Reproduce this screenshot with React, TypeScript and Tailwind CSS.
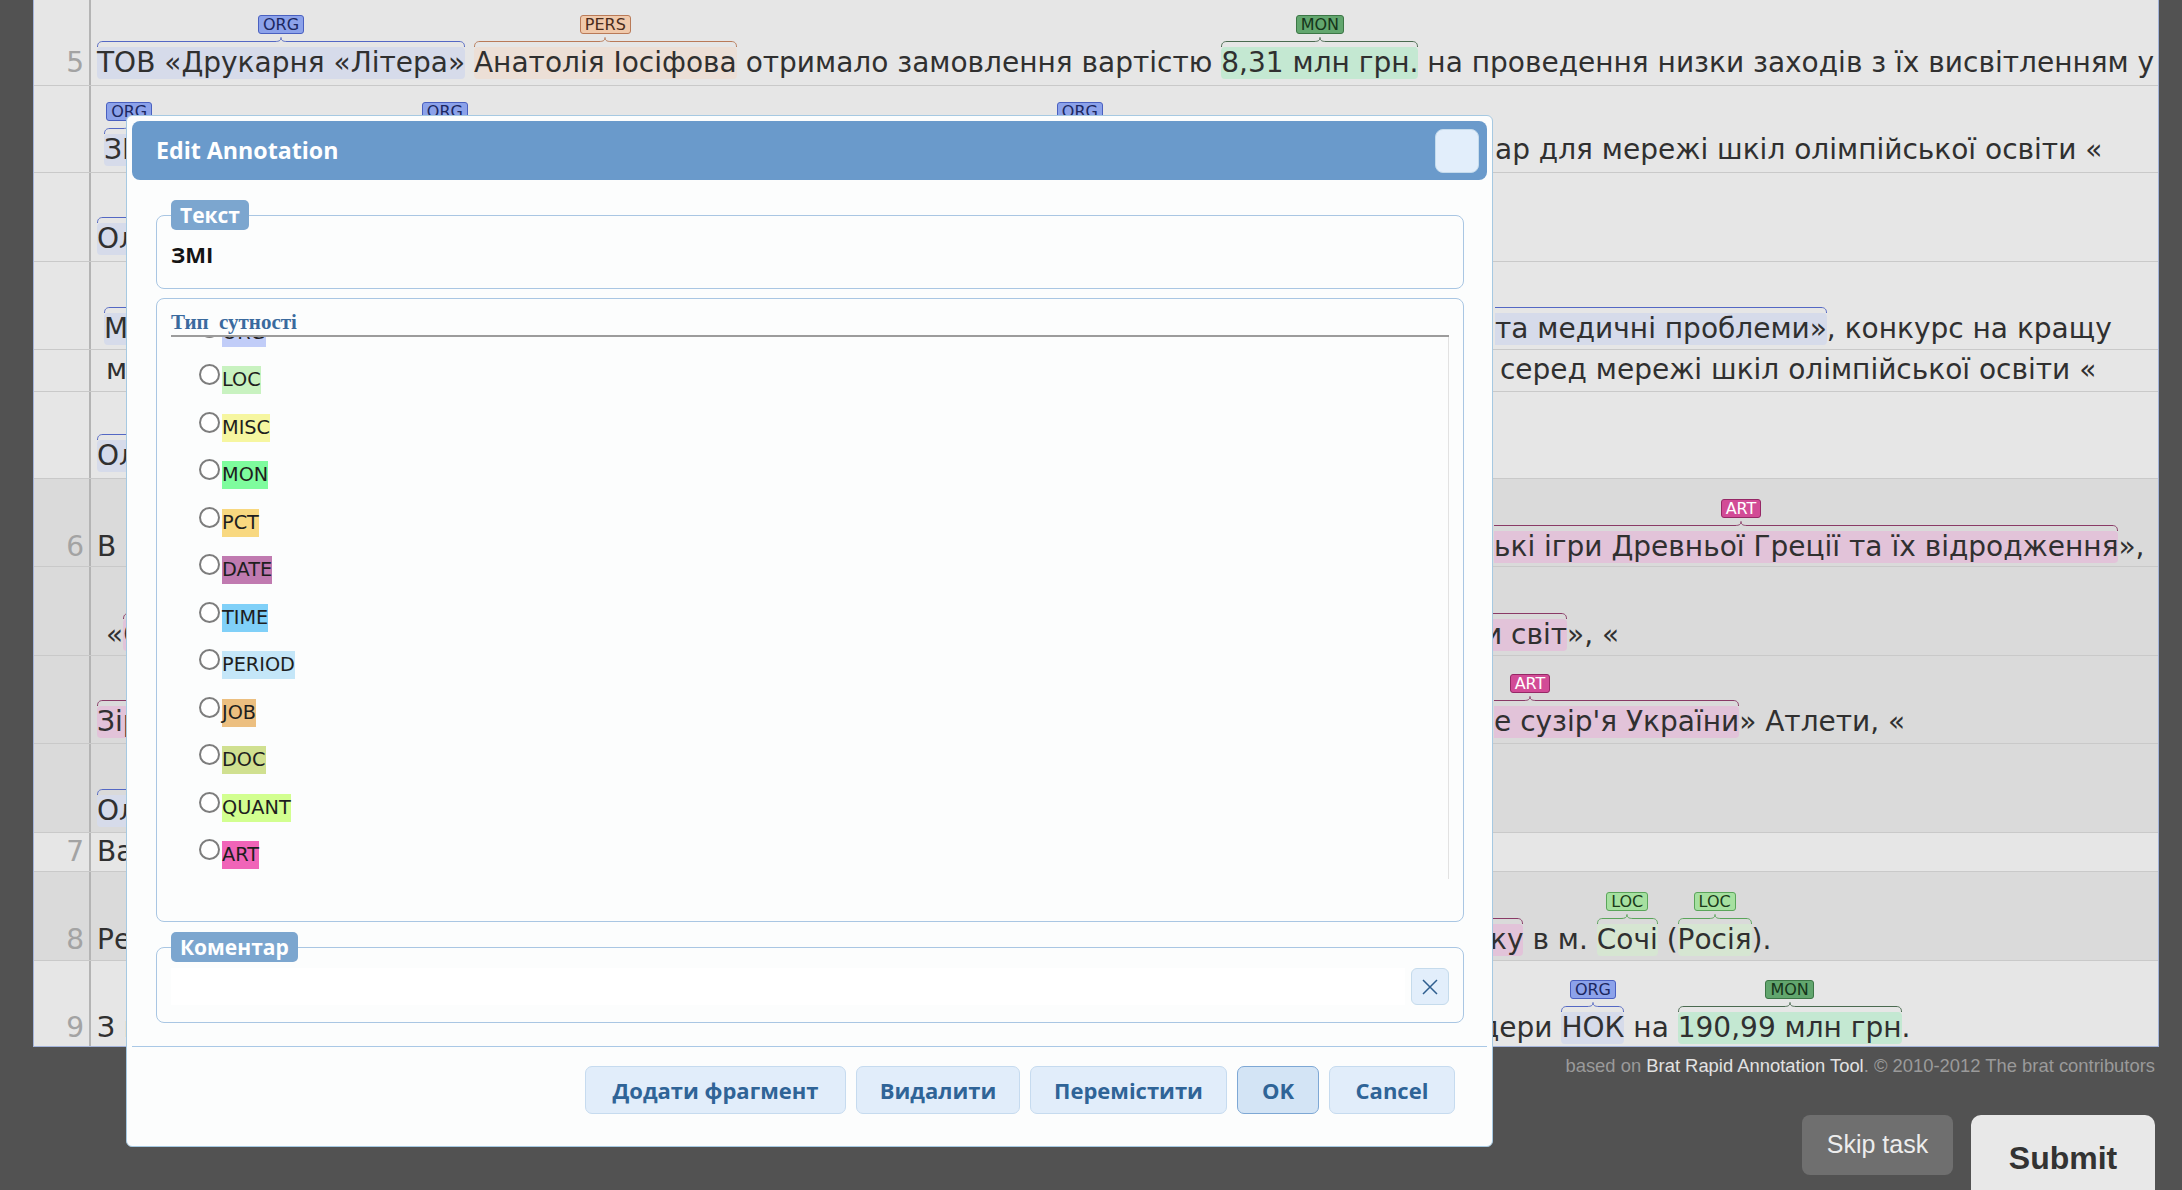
import type { ReactNode } from 'react'

const TYPES = {
  ORG: { hl: 'bg-[#d6dbea]', lab: 'bg-[#8ca2ea] border-[#4a60c0] text-[#1b2760]', br: 'text-[#5468c4]' },
  PERS: { hl: 'bg-[#ecdfd6]', lab: 'bg-[#f0c9ab] border-[#b97a58] text-[#4a2c1c]', br: 'text-[#b97a58]' },
  MON: { hl: 'bg-[#c4e8d2]', lab: 'bg-[#62a66e] border-[#3c7646] text-[#15351a]', br: 'text-[#4a6a50]' },
  ART: { hl: 'bg-[#e2c3d9]', lab: 'bg-[#d24b96] border-[#962866] text-white', br: 'text-[#8a3a66]' },
  LOC: { hl: 'bg-[#d6e6d2]', lab: 'bg-[#a6e0a0] border-[#5aa55a] text-[#1a3a1a]', br: 'text-[#5aa55a]' },
}
type K = keyof typeof TYPES

const ENTITY = [
  { k: 'ORG', bg: 'bg-[#c1cdf8]' },
  { k: 'LOC', bg: 'bg-[#c8f2c0]' },
  { k: 'MISC', bg: 'bg-[#f6f6a0]' },
  { k: 'MON', bg: 'bg-[#7efc9d]' },
  { k: 'PCT', bg: 'bg-[#f8d880]' },
  { k: 'DATE', bg: 'bg-[#c07ab0]' },
  { k: 'TIME', bg: 'bg-[#80d0f8]' },
  { k: 'PERIOD', bg: 'bg-[#c4e6f8]' },
  { k: 'JOB', bg: 'bg-[#ecbf80]' },
  { k: 'DOC', bg: 'bg-[#d0e090]' },
  { k: 'QUANT', bg: 'bg-[#d2ff90]' },
  { k: 'ART', bg: 'bg-[#f064b8]' },
]

function Label({ k }: { k: K }) {
  return (
    <span className={`h-[19px] shrink-0 rounded-[3px] border px-[4px] text-[16px] leading-[17px] ${TYPES[k].lab}`}>{k}</span>
  )
}

// фігурна дужка над фрагментом
function Brace({ tone, left = true, pre }: { tone: string; left?: boolean; pre?: string }) {
  const peak = left || !!pre
  return (
    <div className={`flex h-[10px] ${tone}`}>
      {left && (
        <svg width="6" height="10" className="shrink-0">
          <path d="M0.5 10C0.5 6.5 2 4.5 6 4.5" fill="none" stroke="currentColor" />
        </svg>
      )}
      {peak && <div className={`${pre ?? 'flex-1'} mt-[4px] h-0 shrink-0 border-t border-current`} />}
      {peak && (
        <svg width="12" height="10" className="shrink-0">
          <path d="M0 4.5C4 4.5 6 3.5 6 0.5C6 3.5 8 4.5 12 4.5" fill="none" stroke="currentColor" />
        </svg>
      )}
      <div className="mt-[4px] h-0 flex-1 border-t border-current" />
      <svg width="6" height="10" className="shrink-0">
        <path d="M0 4.5C4 4.5 5.5 6.5 5.5 10" fill="none" stroke="currentColor" />
      </svg>
    </div>
  )
}

function Txt({ t }: { t: string }) {
  return <span className="h-[32px] shrink-0 whitespace-pre leading-[32px]">{t}</span>
}

function Ann({ k, text }: { k: K; text: string }) {
  const s = TYPES[k]
  return (
    <div className="flex shrink-0 flex-col">
      <div className="flex h-[19px] justify-center">
        <Label k={k} />
      </div>
      <div className="mt-[3px]">
        <Brace tone={s.br} />
      </div>
      <span className={`h-[32px] whitespace-pre rounded-[4px] leading-[32px] ${s.hl}`}>{text}</span>
    </div>
  )
}

// фрагмент, початок якого сховано під діалогом
function Cut({ k, text, lw, pre }: { k: K; text: string; lw?: string; pre?: string }) {
  const s = TYPES[k]
  return (
    <div className="flex shrink-0 flex-col">
      <div className={`flex h-[19px] justify-center ${lw ?? ''}`}>{lw && <Label k={k} />}</div>
      <div className="mt-[3px]">
        <Brace tone={s.br} left={false} pre={pre} />
      </div>
      <span className={`h-[32px] whitespace-pre rounded-r-[4px] leading-[32px] ${s.hl}`}>{text}</span>
    </div>
  )
}

interface RowProps {
  num?: string
  h: string
  bg: string
  pb: string
  lp?: string
  ro?: string
  left?: ReactNode
  right?: ReactNode
  full?: ReactNode
  last?: boolean
}

function Row({ num, h, bg, pb, lp = 'pl-[6px]', ro = '', left, right, full, last }: RowProps) {
  return (
    <div className={`flex ${last ? '' : 'border-b border-[#c9c9c9]'} ${h} ${bg}`}>
      <div className={`flex w-[57px] shrink-0 items-end justify-end border-r-2 border-[#b4b4b4] pr-[5px] text-[#a3a3a3] ${pb}`}>
        {num && <span className="h-[32px] leading-[32px]">{num}</span>}
      </div>
      <div className={`flex min-w-0 flex-1 items-end overflow-hidden ${pb}`}>
        {full ? (
          <div className={`flex items-end ${lp}`}>{full}</div>
        ) : (
          <>
            <div className={`flex w-[1402px] shrink-0 items-end overflow-hidden ${lp}`}>{left}</div>
            <div className={`flex shrink-0 items-end ${ro}`}>{right}</div>
          </>
        )}
      </div>
    </div>
  )
}

function Fieldset({ legend, children, className = '' }: { legend: string; children: ReactNode; className?: string }) {
  return (
    <fieldset className={`rounded-[8px] border border-[#a9c6e3] px-[14px] ${className}`}>
      <legend className="h-[30px] rounded-[5px] bg-[#7ca6cf] px-[9px] text-[21px] font-bold leading-[30px] text-white">
        {legend}
      </legend>
      {children}
    </fieldset>
  )
}

const BUTTONS = [
  { t: 'Додати фрагмент', w: 'w-[261px]', c: 'bg-[#e1edfa] border-[#c6dbef]' },
  { t: 'Видалити', w: 'w-[164px]', c: 'bg-[#e1edfa] border-[#c6dbef]' },
  { t: 'Перемістити', w: 'w-[197px]', c: 'bg-[#e1edfa] border-[#c6dbef]' },
  { t: 'OK', w: 'w-[82px]', c: 'bg-[#d3e4f5] border-[#7ea8d5]' },
  { t: 'Cancel', w: 'w-[126px]', c: 'bg-[#e1edfa] border-[#c6dbef]' },
]

function Dialog() {
  return (
    <div className="absolute left-[126px] top-[115px] h-[1032px] w-[1367px] rounded-[6px] border border-[#a6c9e2] bg-[#fcfdfd] p-[5px] font-['Open_Sans',sans-serif]">
      {/* заголовок */}
      <div className="flex h-[59px] items-center justify-between rounded-[8px] bg-[#6a9acb] pl-[24px] pr-[8px]">
        <span className="text-[23.2px] font-bold text-white">Edit Annotation</span>
        <div className="h-[44px] w-[44px] rounded-[8px] border border-[#c5dbec] bg-[#e2eefb]" />
      </div>

      <div className="pl-[24px] pr-[23px] pt-[20px]">
        <Fieldset legend="Текст" className="pb-[18px]">
          <div className="mt-[8px] h-[32px] text-[22px] font-bold leading-[32px] text-[#141414]">ЗМІ</div>
        </Fieldset>

        {/* типи сутностей */}
        <div className="mt-[9px] rounded-[8px] border border-[#a9c6e3] px-[14px] pb-[42px] pt-[10px]">
          <div className="h-[28px] border-b-2 border-[#9c9c9c] font-['Liberation_Serif',serif] text-[21px] font-bold leading-[26px] text-[#3a6a9e] [word-spacing:5px]">
            Тип сутності
          </div>
          <div className="h-[542px] overflow-hidden border-r border-[#e2e2e2]">
            <div className="-mt-[28px]">
              {ENTITY.map(e => (
                <div key={e.k} className="flex h-[47.5px] items-center pl-[28px]">
                  <div className="-mt-[11px] h-[21px] w-[21px] shrink-0 rounded-full border-2 border-[#7d7d7d] bg-white" />
                  <span className={`ml-[2px] h-[28px] font-['DejaVu_Sans',sans-serif] text-[19.3px] leading-[28px] text-[#1e1e1e] ${e.bg}`}>
                    {e.k}
                  </span>
                </div>
              ))}
            </div>
          </div>
        </div>

        <Fieldset legend="Коментар" className="mt-[10px] pb-[17px]">
          <div className="mt-[6px] flex items-center">
            <div className="h-[37px] flex-1 bg-white" />
            <div className="ml-[6px] flex h-[37px] w-[38px] items-center justify-center rounded-[6px] border border-[#c5dbec] bg-[#e2eefb]">
              <svg width="20" height="20" viewBox="0 0 20 20">
                <path d="M3 3L17 17M17 3L3 17" stroke="#2f5f8f" strokeWidth="1.5" />
              </svg>
            </div>
          </div>
        </Fieldset>
      </div>

      <div className="mt-[23px] border-t border-[#a9c8e6]" />
      <div className="mt-[19px] flex justify-end gap-[10px] pr-[32px]">
        {BUTTONS.map(b => (
          <div
            key={b.t}
            className={`flex h-[48px] items-center justify-center rounded-[7px] border text-[22px] font-bold text-[#2f6497] ${b.w} ${b.c}`}
          >
            {b.t}
          </div>
        ))}
      </div>
    </div>
  )
}

export default function App() {
  const light = 'bg-[#e6e6e6]'
  const dark = 'bg-[#dadada]'
  return (
    <div className="relative h-[1190px] w-[2182px] overflow-hidden bg-[#525252] font-['DejaVu_Sans',sans-serif] text-[28px] text-[#303030]">
      <div className="ml-[33px] w-[2126px] border-x border-b border-[#a4b4da]">
        <Row
          num="5"
          h="h-[86px]"
          bg={light}
          pb="pb-[6px]"
          full={
            <>
              <Ann k="ORG" text="ТОВ «Друкарня «Літера»" />
              <Txt t=" " />
              <Ann k="PERS" text="Анатолія Іосіфова" />
              <Txt t=" отримало замовлення вартістю " />
              <Ann k="MON" text="8,31 млн грн." />
              <Txt t=" на проведення низки заходів з їх висвітленням у" />
            </>
          }
        />
        <Row
          h="h-[87px]"
          bg={light}
          pb="pb-[6px]"
          lp="pl-[13px]"
          ro="ml-[2px]"
          left={
            <>
              <Ann k="ORG" text="ЗМІ" />
              <div className="w-[259px] shrink-0" />
              <Ann k="ORG" text="НОК" />
              <div className="w-[572px] shrink-0" />
              <Ann k="ORG" text="НОК" />
            </>
          }
          right={<Txt t="ар для мережі шкіл олімпійської освіти «" />}
        />
        <Row h="h-[89px]" bg={light} pb="pb-[6px]" left={<Ann k="ORG" text="Олімпійська академія України" />} />
        <Row
          h="h-[88px]"
          bg={light}
          pb="pb-[4px]"
          lp="pl-[13px]"
          ro="ml-[2px]"
          left={<Ann k="ORG" text="Медичні аспекти олімпійського спорту" />}
          right={
            <>
              <Cut k="ORG" text="та медичні проблеми»" />
              <Txt t=", конкурс на кращу" />
            </>
          }
        />
        <Row
          h="h-[42px]"
          bg={light}
          pb="pb-[5px]"
          lp="pl-[15px]"
          ro="-ml-[2px]"
          left={<Txt t="методичну розробку уроку" />}
          right={<Txt t=" серед мережі шкіл олімпійської освіти «" />}
        />
        <Row h="h-[87px]" bg={light} pb="pb-[6px]" left={<Ann k="ORG" text="Олімпійський урок" />} />

        <Row
          num="6"
          h="h-[88px]"
          bg={dark}
          pb="pb-[3px]"
          ro="ml-[1px]"
          left={<Txt t="В рамках проекту проведено конкурси" />}
          right={
            <>
              <Cut k="ART" text="ькі ігри Древньої Греції та їх відродження" lw="w-[494px]" pre="w-[241px]" />
              <Txt t="»," />
            </>
          }
        />
        <Row
          h="h-[89px]"
          bg={dark}
          pb="pb-[4px]"
          lp="pl-[15px]"
          ro="-ml-[9px]"
          left={
            <>
              <Txt t="«" />
              <Ann k="ART" text="Олімпійський рух і сучасний" />
            </>
          }
          right={
            <>
              <Cut k="ART" text="и світ" />
              <Txt t="», «" />
            </>
          }
        />
        <Row
          h="h-[88px]"
          bg={dark}
          pb="pb-[5px]"
          ro="ml-[1px]"
          left={<Ann k="ART" text="Зірки спорту — олімпійське" />}
          right={
            <>
              <Cut k="ART" text="е сузір'я України" lw="w-[72px]" pre="w-[30px]" />
              <Txt t="» Атлети, «" />
            </>
          }
        />
        <Row h="h-[89px]" bg={dark} pb="pb-[5px]" left={<Ann k="ORG" text="Олімпійці України" />} />

        <Row num="7" h="h-[39px]" bg={light} pb="pb-[3px]" left={<Txt t="Вартість заходів становила" />} />
        <Row
          num="8"
          h="h-[89px]"
          bg={dark}
          pb="pb-[4px]"
          ro="-ml-[3px]"
          left={<Txt t="Результати представлено на" />}
          right={
            <>
              <Cut k="ART" text="ку" />
              <Txt t=" в м. " />
              <Ann k="LOC" text="Сочі" />
              <Txt t=" (" />
              <Ann k="LOC" text="Росія" />
              <Txt t=")." />
            </>
          }
        />
        <Row
          num="9"
          h="h-[85px]"
          bg={light}
          pb="pb-[2px]"
          ro="-ml-[13px]"
          last
          left={<Txt t="З метою підтримки партнерів лідери" />}
          right={
            <>
              <Txt t="дери " />
              <Ann k="ORG" text="НОК" />
              <Txt t=" на " />
              <Ann k="MON" text="190,99 млн грн" />
              <Txt t="." />
            </>
          }
        />
      </div>

      <div className="mt-[9px] pr-[27px] text-right font-['Liberation_Sans',sans-serif] text-[18.4px] leading-[20px] text-[#9a9a9a]">
        based on <span className="text-[#e2e2e2]">Brat Rapid Annotation Tool</span>. © 2010-2012 The brat contributors
      </div>

      <div className="mt-[39px] flex justify-end gap-[18px] pr-[27px] font-['Liberation_Sans',sans-serif]">
        <div className="flex h-[60px] w-[151px] items-center justify-center rounded-[8px] bg-[#6f6f6f] text-[25px] text-[#ededed]">
          Skip task
        </div>
        <div className="h-[100px] w-[184px] rounded-[10px] bg-[#e8e8e8] pt-[24px] text-center text-[32px] font-bold leading-[38px] text-[#333]">
          Submit
        </div>
      </div>

      <Dialog />
    </div>
  )
}
